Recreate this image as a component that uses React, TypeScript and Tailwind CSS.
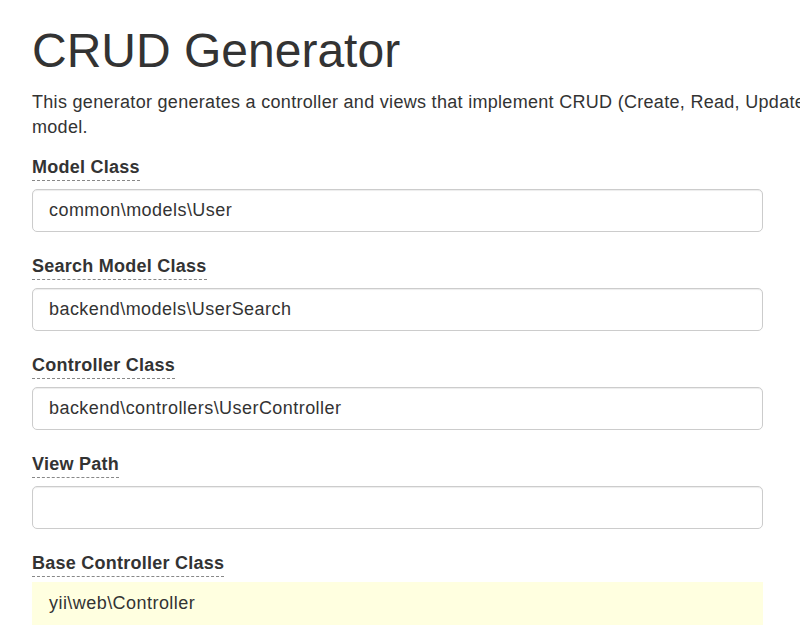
const fields = [
  { label: 'Model Class', value: 'common\\models\\User' },
  { label: 'Search Model Class', value: 'backend\\models\\UserSearch' },
  { label: 'Controller Class', value: 'backend\\controllers\\UserController' },
  { label: 'View Path', value: '' },
]

export default function App() {
  return (
    <div
      className="h-[631px] w-[800px] overflow-hidden bg-white text-[#333]"
      style={{ fontFamily: '"Liberation Sans", Arial, sans-serif' }}
    >
      <div className="w-[1400px] pl-8">
        {/* Header */}
        <h1 className="mt-[25px] mb-[12px] text-[48px] leading-[1.1] font-normal">CRUD Generator</h1>
        <p className="mb-[15px] text-[18px] leading-[25px] tracking-[0.3px] whitespace-nowrap">
          This generator generates a controller and views that implement CRUD (Create, Read, Update, Delete) operations for the specified data
          <br />
          model.
        </p>

        {/* Form */}
        <div className="w-[731px]">
          {fields.map((f) => (
            <div key={f.label} className="mb-[22px]">
              <label className="mb-[8px] inline-block border-b border-dashed border-[#888] text-[18px] leading-[25px] tracking-[0.25px] font-bold">
                {f.label}
              </label>
              <input
                readOnly
                value={f.value}
                className="block h-[43px] w-full rounded-[5px] border border-[#ccc] bg-white px-[16px] text-[18px] tracking-[0.45px] text-[#333] shadow-[inset_0_1px_1px_rgba(0,0,0,0.075)] outline-none"
                style={{ fontFamily: '"Liberation Sans", Arial, sans-serif' }}
              />
            </div>
          ))}
          <div>
            <label className="mb-[5px] inline-block border-b border-dashed border-[#888] text-[18px] leading-[25px] tracking-[0.25px] font-bold">
              Base Controller Class
            </label>
            <div className="flex h-[43px] items-center bg-[#ffffe0] px-[17px] text-[18px] tracking-[0.45px]">yii\web\Controller</div>
          </div>
        </div>
      </div>
    </div>
  )
}
